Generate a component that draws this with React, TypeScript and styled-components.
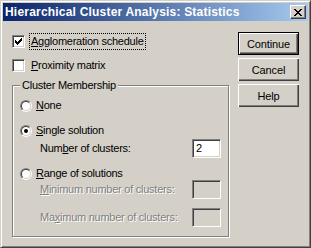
import React from 'react'
import styled, { createGlobalStyle } from 'styled-components'

const GlobalStyle = createGlobalStyle`
  html, body {
    margin: 0;
    padding: 0;
    background: #d4d0c8;
  }
  body {
    font-family: "Liberation Sans", Arial, sans-serif;
    font-size: 11px;
    letter-spacing: -0.25px;
    color: #000;
  }
`

const Window = styled.div`
  width: 311px;
  height: 248px;
  box-sizing: border-box;
  background: #d4d0c8;
  border: 1px solid;
  border-color: #d4d0c8 #404040 #404040 #d4d0c8;
  box-shadow: inset 1px 1px #fff, inset -1px -1px #808080;
  padding: 2px;
  display: flex;
  flex-direction: column;
`

const TitleBar = styled.div`
  height: 18px;
  flex: none;
  display: flex;
  align-items: center;
  justify-content: space-between;
  padding: 0 2px;
  background: linear-gradient(to right, #0a246a, #a6caf0);
`

const TitleText = styled.span`
  color: #fff;
  font-weight: bold;
  font-size: 12px;
  letter-spacing: 0.2px;
  line-height: 18px;
  white-space: nowrap;
`

const CloseButton = styled.button`
  width: 16px;
  height: 14px;
  padding: 0;
  margin: 0;
  box-sizing: border-box;
  background: #d4d0c8;
  border: 1px solid;
  border-color: #fff #404040 #404040 #fff;
  box-shadow: inset -1px -1px #808080;
  display: flex;
  align-items: center;
  justify-content: center;
`

const Body = styled.div`
  flex: 1;
  display: flex;
  padding: 11px 0 0 9px;
  gap: 9px;
`

const LeftColumn = styled.div`
  width: 217px;
  display: flex;
  flex-direction: column;
  padding-top: 1px;
`

const CheckRow = styled.div<{ $gap?: number }>`
  height: 17px;
  display: flex;
  align-items: center;
  margin-top: ${(p) => p.$gap ?? 0}px;
`

const Bevel = styled.span`
  box-sizing: border-box;
  flex: none;
  background: #fff;
  border: 1px solid;
  border-color: #808080 #fff #fff #808080;
  box-shadow: inset 1px 1px #404040, inset -1px -1px #d4d0c8;
`

const CheckBox = styled(Bevel)`
  width: 13px;
  height: 13px;
  display: flex;
  align-items: center;
  justify-content: center;
`

const Label = styled.span<{ $focused?: boolean; $disabled?: boolean }>`
  line-height: 15px;
  white-space: nowrap;
  padding: 0 1px;
  border: 1px dotted ${(p) => (p.$focused ? '#000' : 'transparent')};
  color: ${(p) => (p.$disabled ? '#808080' : '#000')};
  text-shadow: ${(p) => (p.$disabled ? '1px 1px #fff' : 'none')};
  u {
    text-decoration: underline;
    text-underline-offset: 1px;
  }
`

const CheckLabel = styled(Label)`
  margin-left: 4px;
`

const Group = styled.fieldset`
  margin: 5px 0 0 0;
  padding: 7px 7px 0 7px;
  height: 158px;
  box-sizing: border-box;
  border: 1px solid #808080;
  box-shadow: inset 1px 1px #fff, 1px 1px #fff;
  display: flex;
  flex-direction: column;
`

const Legend = styled.legend`
  margin-left: 0;
  padding: 0 2px;
  line-height: 13px;
  background: #d4d0c8;
`

const RadioRow = styled.div<{ $gap: number }>`
  height: 13px;
  display: flex;
  align-items: center;
  margin-top: ${(p) => p.$gap}px;
`

const Radio = styled.span`
  width: 12px;
  height: 12px;
  box-sizing: border-box;
  flex: none;
  border-radius: 50%;
  border: 1px solid;
  border-color: #808080 #fff #fff #808080;
  display: flex;
`

const RadioInner = styled.span<{ $checked?: boolean }>`
  flex: 1;
  border-radius: 50%;
  border: 1px solid;
  border-color: #404040 #d4d0c8 #d4d0c8 #404040;
  background: #fff;
  display: flex;
  align-items: center;
  justify-content: center;
  &::after {
    content: '';
    width: 4px;
    height: 4px;
    border-radius: 50%;
    background: ${(p) => (p.$checked ? '#000' : 'transparent')};
  }
`

const RadioLabel = styled(Label)`
  margin-left: 2px;
  line-height: 13px;
`

const FieldRow = styled.div<{ $gap: number }>`
  height: 19px;
  display: flex;
  align-items: center;
  justify-content: space-between;
  padding-left: 18px;
  margin-top: ${(p) => p.$gap}px;
`

const NumberBox = styled(Bevel)<{ $disabled?: boolean }>`
  width: 29px;
  height: 19px;
  padding: 1px 3px;
  line-height: 15px;
  background: ${(p) => (p.$disabled ? '#d4d0c8' : '#fff')};
`

const ButtonColumn = styled.div`
  display: flex;
  flex-direction: column;
  gap: 3px;
`

const PushButton = styled.button<{ $default?: boolean }>`
  width: 61px;
  height: 23px;
  margin: 0;
  padding: 0;
  box-sizing: border-box;
  font-family: "Liberation Sans", Arial, sans-serif;
  font-size: 11px;
  letter-spacing: -0.1px;
  color: #000;
  background: #d4d0c8;
  border: ${(p) => (p.$default ? '1px solid #000' : 'none')};
  box-shadow: inset 1px 1px #fff, inset -1px -1px #404040, inset -2px -2px #808080;
`

const CheckMark = () => (
  <svg width="7" height="7" viewBox="0 0 7 7" shapeRendering="crispEdges">
    <polygon points="0,2 2,4 7,-1 7,2 2,7 0,5" fill="#000" />
  </svg>
)

const CloseGlyph = () => (
  <svg width="8" height="7" viewBox="0 0 8 7" shapeRendering="crispEdges">
    <path d="M0 0h2v1h1v1h2v-1h1v-1h2v1h-1v1h-1v1h-1v1h1v1h1v1h1v1h-2v-1h-1v-1h-2v1h-1v1h-2v-1h1v-1h1v-1h1v-1h-1v-1h-1z" fill="#000" />
  </svg>
)

export default function App() {
  return (
    <>
      <GlobalStyle />
      <Window>
        <TitleBar>
          <TitleText>Hierarchical Cluster Analysis: Statistics</TitleText>
          <CloseButton>
            <CloseGlyph />
          </CloseButton>
        </TitleBar>
        <Body>
          <LeftColumn>
            <CheckRow>
              <CheckBox>
                <CheckMark />
              </CheckBox>
              <CheckLabel $focused>
                <u>A</u>gglomeration schedule
              </CheckLabel>
            </CheckRow>
            <CheckRow $gap={7}>
              <CheckBox />
              <CheckLabel>
                <u>P</u>roximity matrix
              </CheckLabel>
            </CheckRow>
            <Group>
              <Legend>Cluster Membership</Legend>
              <RadioRow $gap={0}>
                <Radio>
                  <RadioInner />
                </Radio>
                <RadioLabel>
                  <u>N</u>one
                </RadioLabel>
              </RadioRow>
              <RadioRow $gap={12}>
                <Radio>
                  <RadioInner $checked />
                </Radio>
                <RadioLabel>
                  <u>S</u>ingle solution
                </RadioLabel>
              </RadioRow>
              <FieldRow $gap={2}>
                <Label>
                  Num<u>b</u>er of clusters:
                </Label>
                <NumberBox>2</NumberBox>
              </FieldRow>
              <RadioRow $gap={9}>
                <Radio>
                  <RadioInner />
                </Radio>
                <RadioLabel>
                  <u>R</u>ange of solutions
                </RadioLabel>
              </RadioRow>
              <FieldRow $gap={0}>
                <Label $disabled>
                  <u>M</u>inimum number of clusters:
                </Label>
                <NumberBox $disabled />
              </FieldRow>
              <FieldRow $gap={9}>
                <Label $disabled>
                  Ma<u>x</u>imum number of clusters:
                </Label>
                <NumberBox $disabled />
              </FieldRow>
            </Group>
          </LeftColumn>
          <ButtonColumn>
            <PushButton $default>Continue</PushButton>
            <PushButton>Cancel</PushButton>
            <PushButton>Help</PushButton>
          </ButtonColumn>
        </Body>
      </Window>
    </>
  )
}
